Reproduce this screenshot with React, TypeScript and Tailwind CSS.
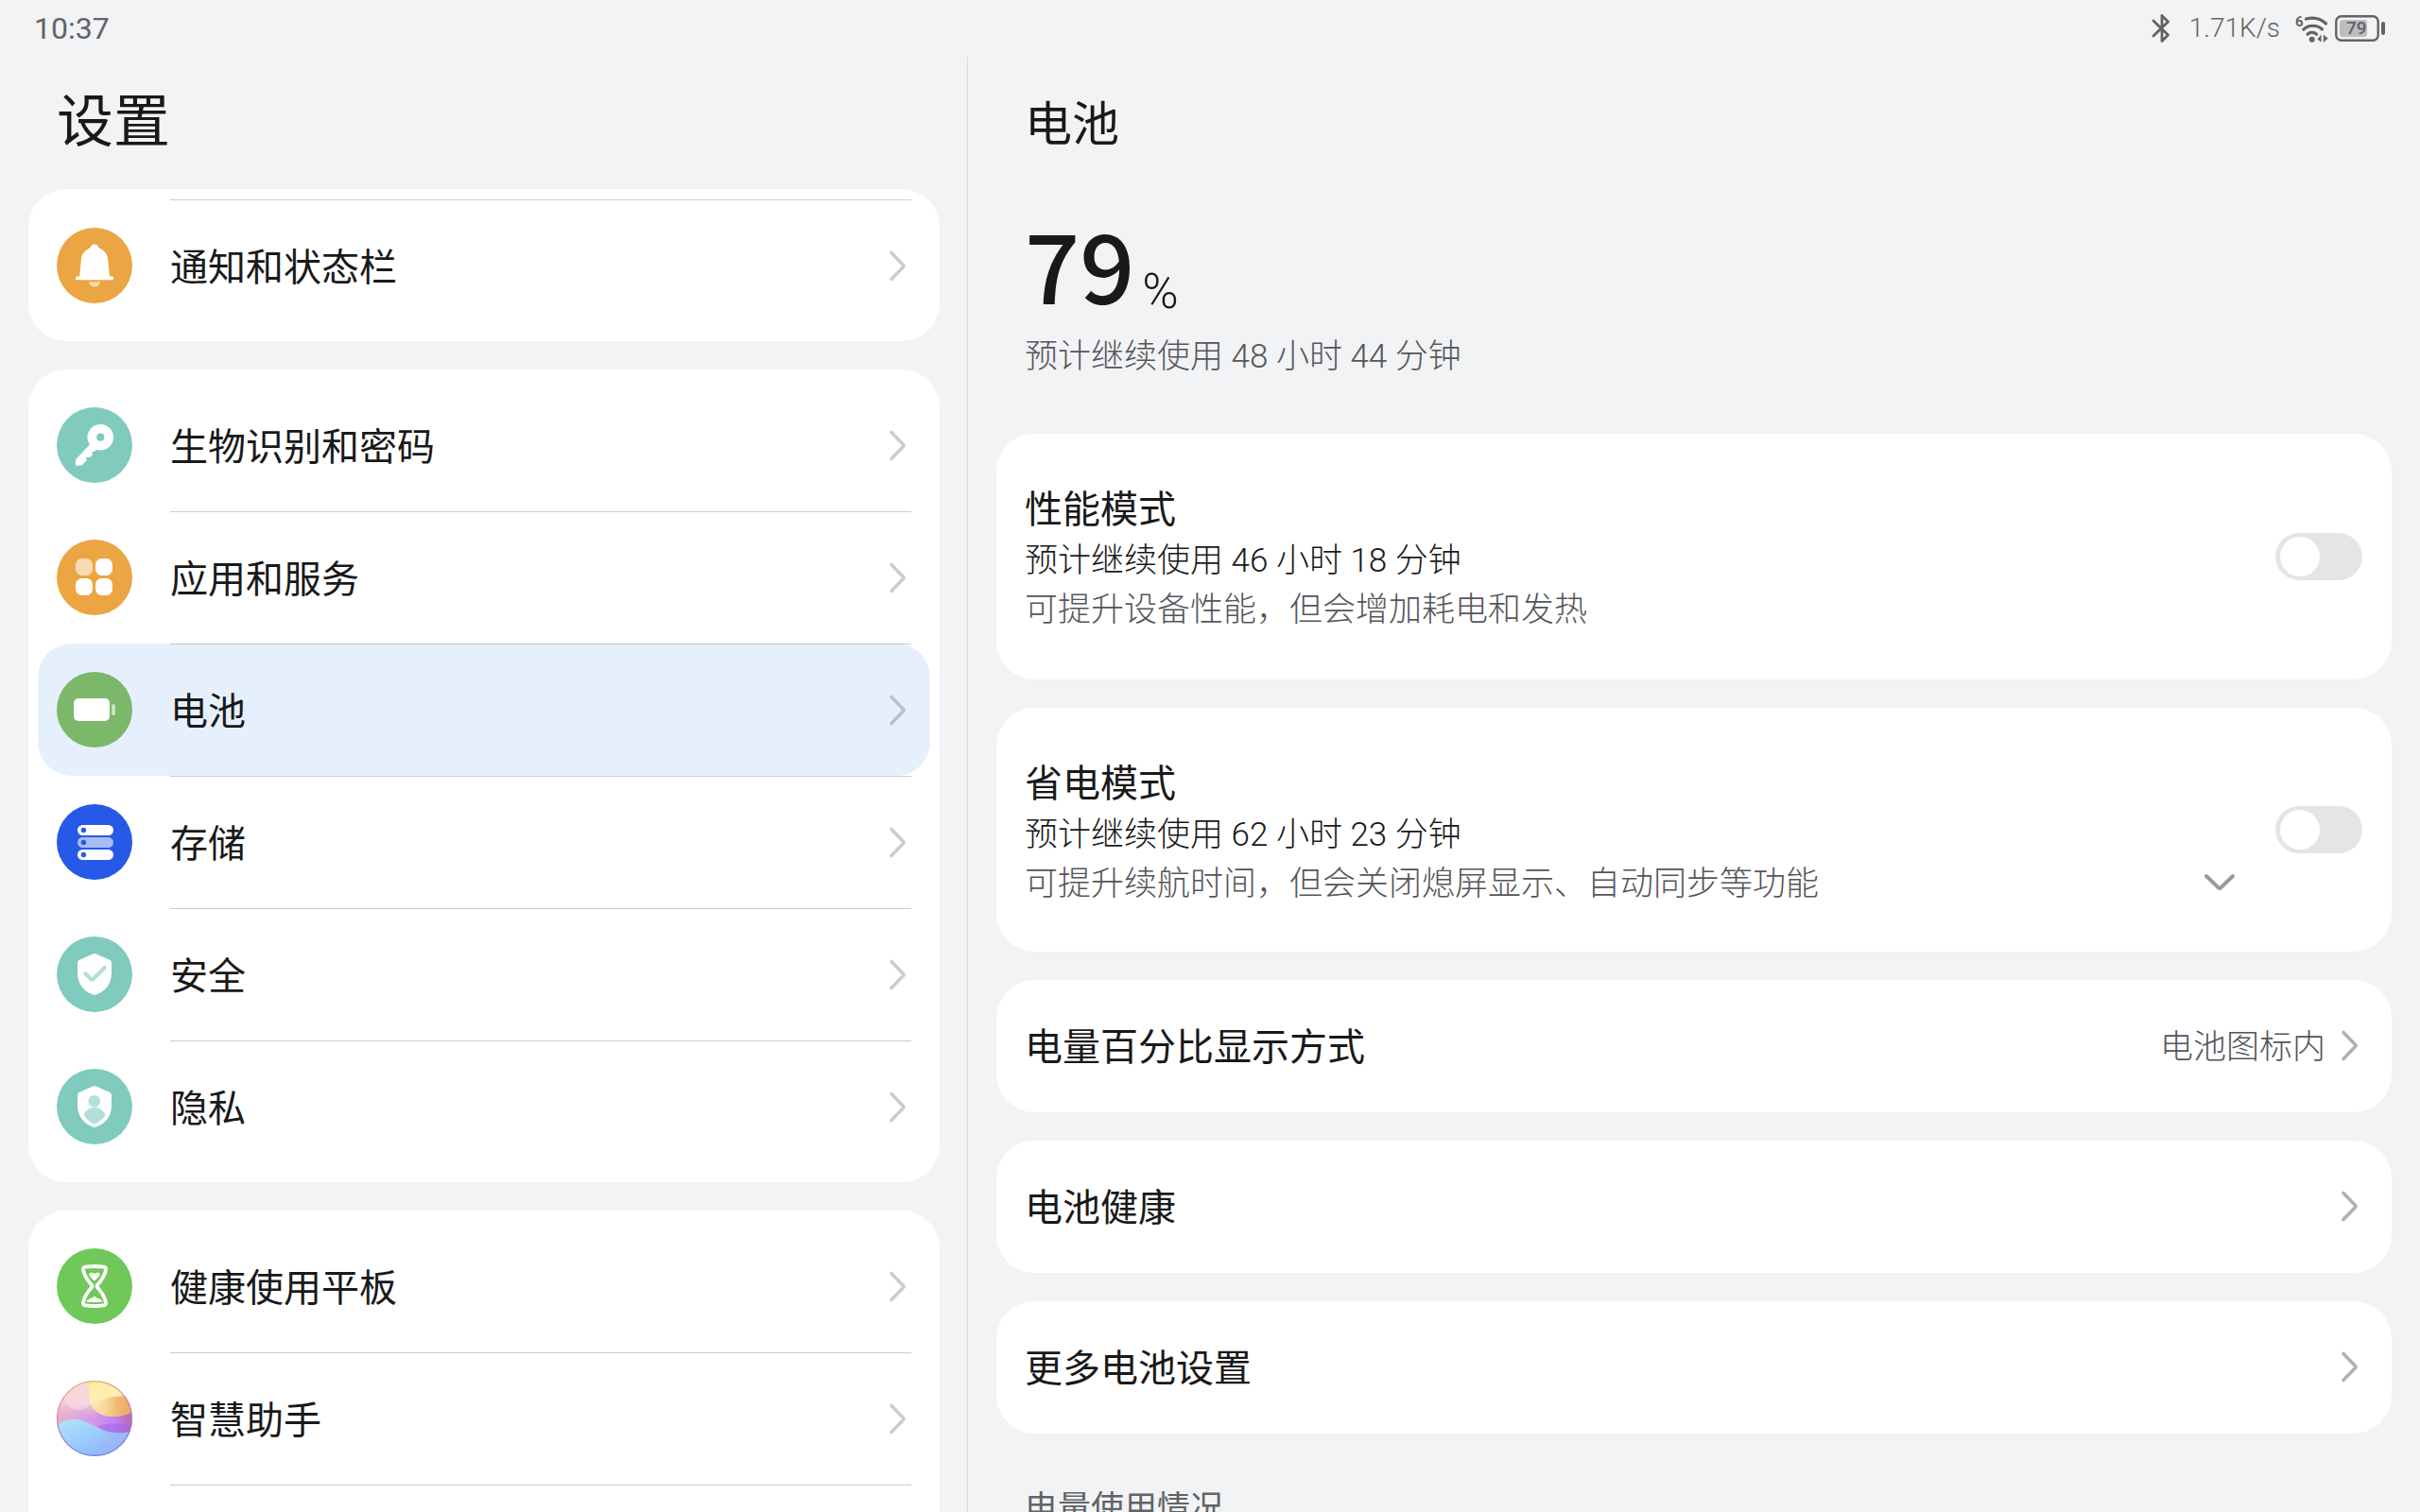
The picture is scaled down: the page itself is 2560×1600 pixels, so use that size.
import React, { useState } from 'react';

const BellIcon = () => (
    <svg viewBox="0 0 80 80" className="w-full h-full" fill="#fff">
        <path d="M35.5 21.2 a4.6 4.6 0 0 1 9 0 C50.5 23.8 53.6 27.8 54.1 33.5 L56 51.5 H58.3 a1.7 1.9 0 0 1 0 3.8 H21.7 a1.7 1.9 0 0 1 0 -3.8 H24.2 L25.9 33.5 C26.4 27.8 29.5 23.8 35.5 21.2 Z" />
        <path d="M34 57.2 H46 C45.5 60.4 43 62.4 40 62.4 C37 62.4 34.5 60.4 34 57.2 Z" opacity=".6" />
    </svg>
);

const KeyIcon = () => (
    <svg viewBox="0 0 80 80" className="w-full h-full" fill="#fff">
        <path fillRule="evenodd" d="M46.3 18 a13.7 13.7 0 1 1 0 27.4 a13.7 13.7 0 0 1 -4.2 -.7 L39 47.3 L36.8 47 L38 50 L35.5 52.8 L31 53 L31.8 56 L26.3 61.8 H20 V55.2 L34.9 39.4 A13.7 13.7 0 0 1 46.3 18 Z M46.3 27.6 a4.1 4.1 0 1 0 0 8.2 a4.1 4.1 0 0 0 0 -8.2 Z" />
    </svg>
);

const AppsIcon = () => (
    <svg viewBox="0 0 80 80" className="w-full h-full" fill="#fff">
        <rect x="20" y="20" width="18" height="18" rx="6.5" opacity=".6" />
        <rect x="41" y="20" width="18" height="18" rx="6.5" />
        <rect x="20" y="41" width="18" height="18" rx="6.5" />
        <rect x="41" y="41" width="18" height="18" rx="6.5" />
    </svg>
);

const BatteryIcon = () => (
    <svg viewBox="0 0 80 80" className="w-full h-full" fill="#fff">
        <rect x="18" y="28" width="38" height="24" rx="5" />
        <rect x="58" y="34" width="4" height="12" rx="2" opacity=".6" />
    </svg>
);

const StorageIcon = () => (
    <svg viewBox="0 0 80 80" className="w-full h-full" fill="#fff">
        <rect x="22" y="22" width="38" height="11" rx="5.5" />
        <rect x="22" y="35" width="38" height="11" rx="5.5" opacity=".6" />
        <rect x="22" y="48" width="38" height="11" rx="5.5" />
        <g fill="#2759e9">
            <circle cx="28.4" cy="27.5" r="2.7" />
            <circle cx="28.4" cy="40.5" r="2.7" />
            <circle cx="28.4" cy="53.5" r="2.7" />
        </g>
    </svg>
);

const shieldPath = 'M38.4 18.4 Q40 17.6 41.6 18.4 L56 24.8 Q58 25.8 58 28 V39 C58 50 51 58.5 41.8 61.5 Q40 62.2 38.2 61.5 C29 58.5 22 50 22 39 V28 Q22 25.8 24 24.8 Z';

const ShieldIcon = () => (
    <svg viewBox="0 0 80 80" className="w-full h-full" fill="none">
        <path d={shieldPath} fill="#fff" />
        <path d="M30.3 39.3 L36 45 Q37.3 46.2 38.6 45 L50.6 33" stroke="#b2e0d8" strokeWidth="4.2" strokeLinecap="round" />
    </svg>
);

const PrivacyIcon = () => (
    <svg viewBox="0 0 80 80" className="w-full h-full">
        <path d={shieldPath} fill="#fff" />
        <circle cx="39.8" cy="34.3" r="6.4" fill="#b2e0d8" />
        <path d="M28.5 48.6 C31 43.4 35 41 40 41 C45 41 49 43.4 51.5 48.6 C49 53.2 45.6 56.3 41.4 57.9 Q40 58.4 38.6 57.9 C34.4 56.3 31 53.2 28.5 48.6 Z" fill="#b2e0d8" />
    </svg>
);

const HourglassIcon = () => (
    <svg viewBox="0 0 80 80" className="w-full h-full" fill="none">
        <path
            d="M30.5 19.6 Q40 18.4 49.5 19.6 Q52.4 20 52 22.6 C50.8 29.5 46.4 35 43 38.8 Q42 40 43 41.2 C46.4 45 50.8 50.5 52 57.4 Q52.4 60 49.5 60.4 Q40 61.6 30.5 60.4 Q27.6 60 28 57.4 C29.2 50.5 33.6 45 37 41.2 Q38 40 37 38.8 C33.6 35 29.2 29.5 28 22.6 Q27.6 20 30.5 19.6 Z"
            stroke="#fff"
            strokeWidth="3.8"
        />
        <path d="M40 34.4 C37.4 32.3 34.2 30 34.2 27.6 C34.2 25.2 38 25 40 27 C42 24.8 45.6 25 45.6 27.6 C45.6 30 42.6 32.3 40 34.4 Z" fill="#fff" />
        <path d="M31.2 56.2 C33.6 53 37 53.6 40 50.6 C43 53.6 46.4 53 48.8 56.2 Q40 58 31.2 56.2 Z" fill="#fff" />
    </svg>
);

const AssistantIcon = () => (
    <svg viewBox="0 0 80 80" className="w-full h-full">
        <defs>
            <clipPath id="orb"><circle cx="40" cy="40" r="40" /></clipPath>
            <linearGradient id="orbBase" x1="0" y1="0" x2="1" y2="0">
                <stop offset="0" stopColor="#e9b3cb" />
                <stop offset=".45" stopColor="#d59be6" />
                <stop offset=".75" stopColor="#c084f2" />
                <stop offset="1" stopColor="#b568b4" />
            </linearGradient>
            <linearGradient id="orbPink" x1="0" y1="0" x2="0" y2="1">
                <stop offset="0" stopColor="#f5d2bd" />
                <stop offset=".6" stopColor="#f2cbda" />
                <stop offset="1" stopColor="#ecb2c6" stopOpacity="0" />
            </linearGradient>
            <linearGradient id="orbYellow" x1="0" y1="0" x2=".3" y2="1">
                <stop offset="0" stopColor="#fbeb9c" />
                <stop offset=".5" stopColor="#fdf0b4" />
                <stop offset="1" stopColor="#f8cfa0" />
            </linearGradient>
            <linearGradient id="orbOrange" x1="0" y1="0" x2="1" y2="0">
                <stop offset="0" stopColor="#fce9b8" stopOpacity="0" />
                <stop offset=".6" stopColor="#f2bc72" />
                <stop offset="1" stopColor="#eaa862" />
            </linearGradient>
            <linearGradient id="orbBlue" x1="0" y1="0" x2="1" y2="1">
                <stop offset="0" stopColor="#b4e4fb" />
                <stop offset=".45" stopColor="#9bcdfa" />
                <stop offset="1" stopColor="#84a8f6" />
            </linearGradient>
            <linearGradient id="orbRim" x1="0" y1="0" x2=".2" y2="1">
                <stop offset="0" stopColor="#eec269" />
                <stop offset=".45" stopColor="#c987ae" />
                <stop offset="1" stopColor="#7189e2" />
            </linearGradient>
        </defs>
        <g clipPath="url(#orb)">
            <rect width="80" height="80" fill="url(#orbBase)" />
            <rect width="42" height="40" fill="url(#orbPink)" />
            <circle cx="23" cy="15" r="16" fill="#fbdfe8" opacity=".5" />
            <path d="M34 0 H80 V33 C72 37 64 38.5 56 38 C45 37 36 30 34.5 20 Z" fill="url(#orbYellow)" />
            <path d="M37 28 C44 20 58 15 80 17 V33 C72 37 64 38.5 56 38 C47 37.4 40 33.5 37 28 Z" fill="url(#orbOrange)" />
            <path d="M42 48 C52 45 66 44 80 49 V58 H60 Z" fill="#9a62ea" opacity=".5" />
            <path d="M0 47 C8 42 15 40.3 22 41 C36 43 46 55.5 66 55.5 Q73 55.5 80 53.5 V80 H0 Z" fill="url(#orbBlue)" />
            <path d="M38 80 C48 70 50 62 47 51.5 C54 54.5 62 56 80 53.5 V80 Z" fill="#a9aef8" opacity=".3" />
        </g>
        <circle cx="40" cy="40" r="39.4" fill="none" stroke="url(#orbRim)" strokeWidth="1.2" />
    </svg>
);

const Chevron = ({ className }: { className: string }) => (
    <svg viewBox="0 0 24 40" className={`w-6 h-10 shrink-0 ${className}`} fill="none" stroke="currentColor" strokeWidth="3.6" strokeLinecap="round" strokeLinejoin="round">
        <path d="M3 5.5 L15.5 18.5 Q16.4 19.5 15.5 20.5 L3 33.5" />
    </svg>
);

const groups = [
    [
        { label: '通知和状态栏', icon: <BellIcon />, color: 'bg-[#eba543]' }
    ],
    [
        { label: '生物识别和密码', icon: <KeyIcon />, color: 'bg-[#80cbbe]' },
        { label: '应用和服务', icon: <AppsIcon />, color: 'bg-[#eba543]' },
        { label: '电池', icon: <BatteryIcon />, color: 'bg-[#7bb86a]' },
        { label: '存储', icon: <StorageIcon />, color: 'bg-[#2759e9]' },
        { label: '安全', icon: <ShieldIcon />, color: 'bg-[#80cbbe]' },
        { label: '隐私', icon: <PrivacyIcon />, color: 'bg-[#80cbbe]' }
    ],
    [
        { label: '健康使用平板', icon: <HourglassIcon />, color: 'bg-[#70c85b]' },
        { label: '智慧助手', icon: <AssistantIcon />, color: 'bg-transparent' },
        { label: '', icon: null, color: 'bg-transparent' }
    ]
];

const modes = [
    {
        id: 'performance',
        title: '性能模式',
        estimate: '预计继续使用 46 小时 18 分钟',
        hint: '可提升设备性能，但会增加耗电和发热',
        expandable: false
    },
    {
        id: 'saver',
        title: '省电模式',
        estimate: '预计继续使用 62 小时 23 分钟',
        hint: '可提升续航时间，但会关闭熄屏显示、自动同步等功能',
        expandable: true
    }
];

const links = [
    { label: '电量百分比显示方式', value: '电池图标内' },
    { label: '电池健康', value: '' },
    { label: '更多电池设置', value: '' }
];

const StatusBar: React.FC = () => (
    <header className="h-[60px] shrink-0 flex items-center justify-between px-9 text-[32px] leading-[40px] text-[#626365]">
        <span>10:37</span>
        <div className="flex items-center">
            <svg viewBox="0 0 20 32" className="w-5 h-8 mr-5" fill="none" stroke="currentColor" strokeWidth="2.8" strokeLinecap="round" strokeLinejoin="round">
                <path d="M2 8 L17.5 23 L11 29.6 V2.4 L17.5 9 L2 24" />
            </svg>
            <span className="text-[28px] font-light mr-4">1.71K/s</span>
            <svg viewBox="0 0 36 32" className="w-9 h-8 mr-[6px] overflow-visible" fill="none" stroke="currentColor" strokeWidth="3.2" strokeLinecap="round">
                <text x="0" y="14" fontSize="15" fontWeight="700" fill="currentColor" stroke="none">6</text>
                <path d="M11.5 6 C19 4 27 5.8 32.5 11" />
                <path d="M8.8 17.2 C14 12 23 12 28.4 17" />
                <path d="M13 22.2 C15.6 19.8 20 19.8 22.6 22.2" />
                <circle cx="17.7" cy="27.8" r="3" fill="currentColor" stroke="none" />
                <path d="M23.4 27.6 L27.6 22.4 V30.4 Z M29.8 22.8 L34.8 26.4 L29.8 31 Z" fill="currentColor" stroke="none" />
            </svg>
            <div className="relative w-[54px] h-7">
                <svg viewBox="0 0 54 28" className="w-full h-full" fill="none">
                    <rect x="1.3" y="1.3" width="44.4" height="25.4" rx="5.5" stroke="currentColor" strokeWidth="2.4" />
                    <rect x="5" y="5" width="29" height="18" rx="3" fill="#bcbdbf" />
                    <rect x="49" y="7" width="4" height="14" rx="2" fill="currentColor" />
                </svg>
                <span className="absolute left-3 top-0 text-[19px] leading-7 font-medium">79</span>
            </div>
        </div>
    </header>
);

const Sidebar: React.FC = () => {
    const [selected, setSelected] = useState('电池');

    return (
        <aside className="w-2/5 shrink-0 flex flex-col pl-[30px] pr-[29px] border-r border-[#d9dadc]">
            <h1 className="h-[140px] shrink-0 pl-[30px] text-[60px] leading-[140px]">设置</h1>
            <nav className="flex-1 min-h-0 overflow-hidden rounded-t-[40px] flex flex-col gap-[30px]">
                {groups.map((group, groupIndex) => (
                    <ul key={groupIndex} className={`shrink-0 bg-white rounded-[40px] px-[10px] pb-[10px] ${groupIndex === 0 ? 'pt-[11px]' : 'pt-[10px]'}`}>
                        {group.map((item, index) => (
                            <li key={item.label}>
                                <button
                                    onClick={() => setSelected(item.label)}
                                    className={`w-full h-[140px] px-5 flex items-center gap-10 rounded-[36px] text-left ${selected === item.label ? 'bg-[#e6f0fd]' : ''}`}
                                >
                                    <span className={`w-20 h-20 shrink-0 rounded-full ${item.color}`}>{item.icon}</span>
                                    <span className={`flex-1 h-full flex items-center justify-between border-t ${groupIndex > 0 && index === 0 ? 'border-transparent' : 'border-black/20'}`}>
                                        <span className="pt-[4px] text-[40px] leading-[56px]">{item.label}</span>
                                        <Chevron className="text-black/20" />
                                    </span>
                                </button>
                            </li>
                        ))}
                    </ul>
                ))}
            </nav>
        </aside>
    );
};

const BatteryPanel: React.FC = () => {
    const [enabled, setEnabled] = useState<Record<string, boolean>>({});

    const toggle = (id: string) => setEnabled((prev) => ({ ...prev, [id]: !prev[id] }));

    return (
        <main className="flex-1 min-w-0 overflow-hidden px-[30px]">
            <h2 className="h-[140px] pl-[30px] text-[50px] leading-[144px]">电池</h2>

            <div className="h-[259px] pl-[30px] pt-4">
                <p className="mb-3 flex items-end gap-2">
                    <span className="text-[102px] leading-[124px] font-medium font-['Noto_Sans_CJK_SC']">79</span>
                    <span className="text-[52px] leading-[62px] font-light">%</span>
                </p>
                <p className="text-[35px] leading-[52px] font-light text-[#55565a]">预计继续使用 48 小时 44 分钟</p>
            </div>

            <div className="flex flex-col gap-[30px]">
                {modes.map((mode) => (
                    <section key={mode.id} className="bg-white rounded-[40px] pl-[30px] pr-[31px] flex items-center">
                        <label htmlFor={mode.id} className={`flex-1 pt-[53px] ${mode.expandable ? 'pb-[45px]' : 'pb-[47px]'}`}>
                            <span className="block text-[40px] leading-[56px]">{mode.title}</span>
                            <span className="block text-[35px] leading-[52px] font-light">{mode.estimate}</span>
                            <span className="block text-[35px] leading-[52px] font-light text-[#55565a]">{mode.hint}</span>
                        </label>
                        {mode.expandable && (
                            <button aria-label="展开" className="self-end mb-[47px] mr-[42px] h-[52px] flex items-center text-[#999]">
                                <svg viewBox="0 0 34 20" className="w-[34px] h-5" fill="none" stroke="currentColor" strokeWidth="4" strokeLinecap="round" strokeLinejoin="round">
                                    <path d="M3 3 L16 15.6 Q17 16.5 18 15.6 L31 3" />
                                </svg>
                            </button>
                        )}
                        <input
                            id={mode.id}
                            type="checkbox"
                            role="switch"
                            checked={!!enabled[mode.id]}
                            onChange={() => toggle(mode.id)}
                            className="appearance-none w-[92px] h-[50px] rounded-full bg-[#e5e5e5] p-1 pl-[5px] flex before:block before:w-[42px] before:h-[42px] before:rounded-full before:bg-white checked:bg-[#2759e9] checked:justify-end"
                        />
                    </section>
                ))}

                {links.map((link) => (
                    <button key={link.label} className="h-[140px] bg-white rounded-[40px] px-[30px] flex items-center text-left">
                        <span className="flex-1 pt-[4px] text-[40px] leading-[56px]">{link.label}</span>
                        <span className="pt-[4px] mr-4 text-[35px] leading-[52px] font-light text-[#55565a]">{link.value}</span>
                        <Chevron className="text-[#b0b0b0]" />
                    </button>
                ))}
            </div>

            <h3 className="mt-[54px] pl-[30px] text-[35px] leading-[52px] text-[#626365]">电量使用情况</h3>
        </main>
    );
};

const App: React.FC = () => {
    return (
        <div className="h-screen overflow-hidden flex flex-col bg-[#f1f3f5] text-[#191919] font-[Roboto,'Noto_Sans_CJK_SC',sans-serif]">
            <StatusBar />
            <div className="flex-1 min-h-0 flex">
                <Sidebar />
                <BatteryPanel />
            </div>
        </div>
    );
};

export default App;
